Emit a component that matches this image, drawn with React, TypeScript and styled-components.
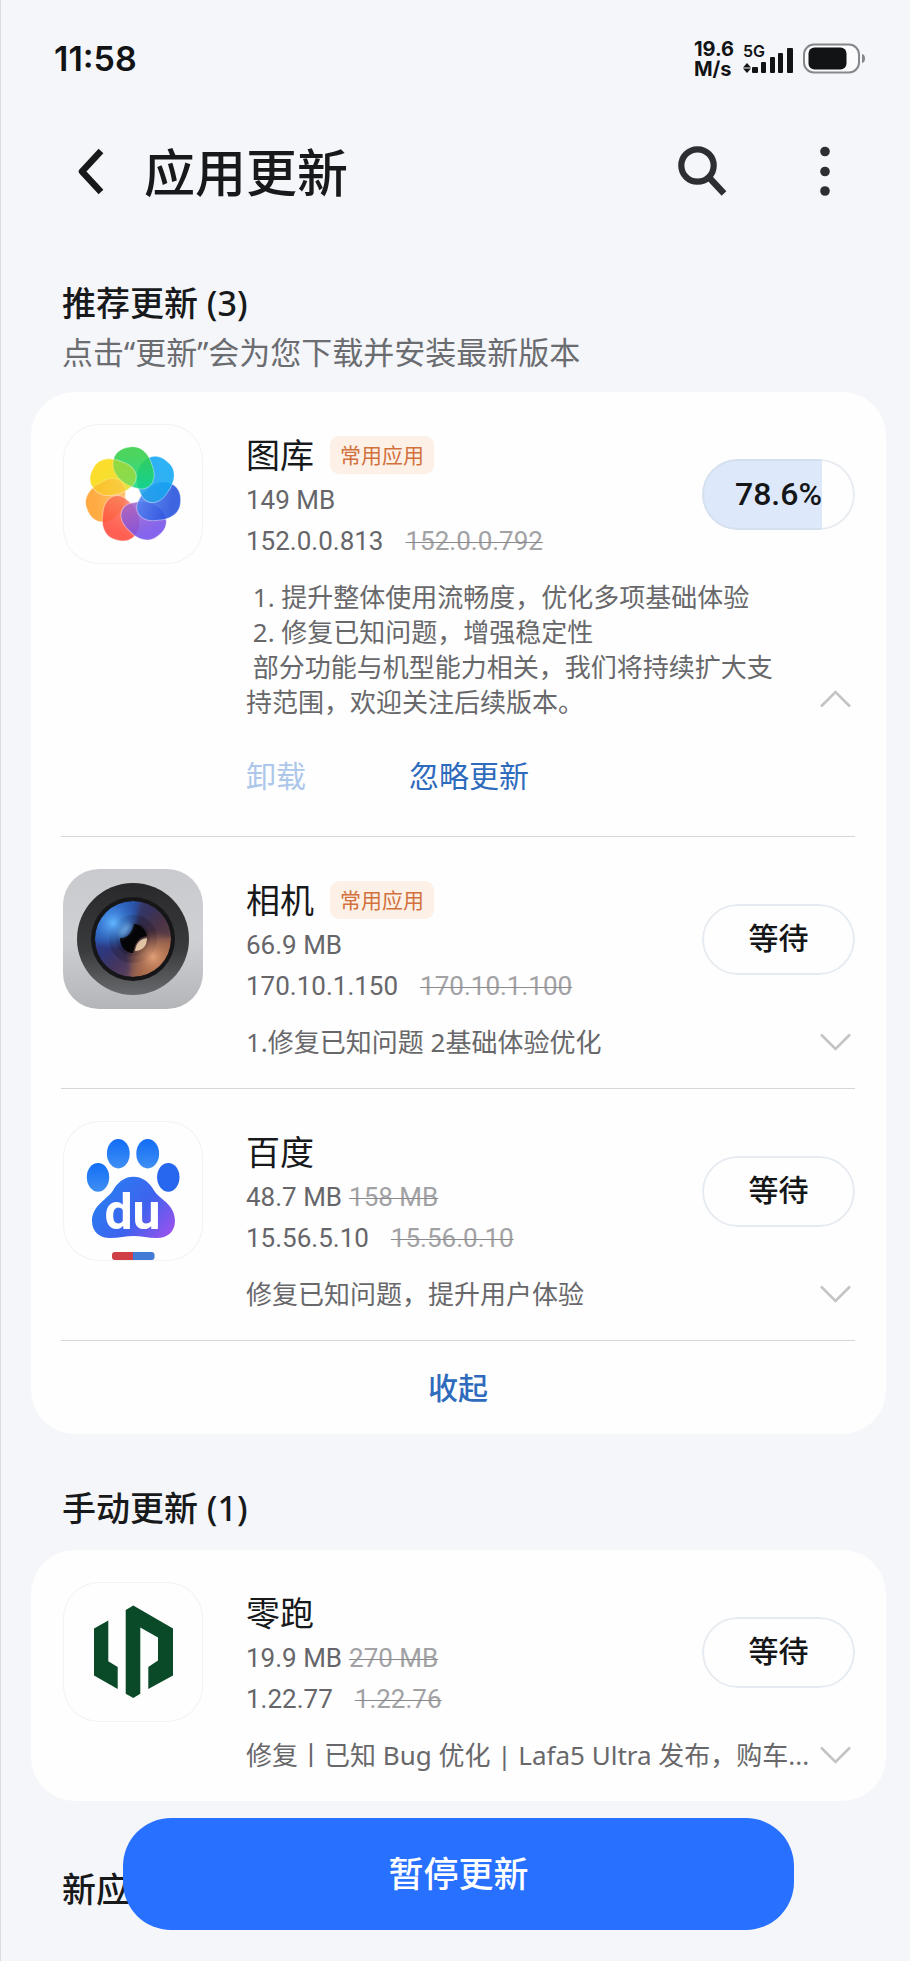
import React, { useState } from "react";
import styled, { createGlobalStyle, css } from "styled-components";

const GlobalStyle = createGlobalStyle`
  *, *::before, *::after { box-sizing: border-box; }
  html { background: #f5f6fa; }
  body {
    margin: 0;
    font-family: "Noto Sans", "Noto Sans CJK SC", sans-serif;
    color: #17191b;
  }
  h1, h2, h3, p, ul { margin: 0; padding: 0; font-weight: inherit; }
  ul { list-style: none; }
  button {
    margin: 0; padding: 0; border: 0; background: none;
    font-family: inherit; color: inherit; cursor: pointer;
  }
  svg { display: block; }
`;

const Page = styled.div`
  min-height: 100vh;
  padding: 0 24px 49px 30px;
  background: #f5f6fa;
  border-left: 1px solid #d7dae2;
`;

const StatusBar = styled.div`
  display: flex;
  align-items: center;
  justify-content: space-between;
  height: 117px;
  padding: 0 21px 0 23px;
  font-family: Inter, "Noto Sans", sans-serif;
  color: #111315;
`;

const Clock = styled.span`
  font-size: 34px;
  line-height: 40px;
  font-weight: 600;
`;

const StatusIcons = styled.div`
  display: flex;
  align-items: center;
  gap: 9px;
`;

const NetSpeed = styled.span`
  display: flex;
  flex-direction: column;
  font-size: 20px;
  line-height: 20px;
  font-weight: 700;
`;

const Signal = styled.div`
  position: relative;
  width: 51px;
  height: 32px;
`;

const NetType = styled.span`
  position: absolute;
  top: 0;
  left: 0;
  font-size: 16px;
  line-height: 16px;
  font-weight: 600;
`;

const Header = styled.header`
  display: flex;
  align-items: center;
  height: 112px;
  padding: 0 31px 2px 36px;
`;

const IconButton = styled.button`
  display: flex;
  align-items: center;
  justify-content: center;
  width: 60px;
  height: 60px;
`;

const Title = styled.h1`
  flex: 1;
  padding-left: 17px;
  font-size: 51px;
  line-height: 60px;
  font-weight: 500;
`;

const HeaderActions = styled.div`
  display: flex;
  gap: 62px;
`;

const Section = styled.section<{ $loose?: boolean }>`
  padding-top: ${(p) => (p.$loose ? 66 : 52)}px;
`;

const SectionTitle = styled.h2`
  padding-left: 31px;
  font-size: 34px;
  line-height: 44px;
  font-weight: 500;
`;

const SectionHint = styled.p`
  margin-top: 7px;
  padding-left: 31px;
  font-size: 31px;
  line-height: 40px;
  color: #6a6c70;
`;

const Card = styled.div`
  margin-top: 20px;
  padding: 0 31px 0 30px;
  border-radius: 44px;
  background: #fefefe;
`;

const Item = styled.li`
  display: flex;
  gap: 43px;
  padding: 32px 0 28px 2px;

  & + & { border-top: 1px solid #d6d6d8; }
`;

const AppIcon = styled.div<{ $framed?: boolean }>`
  flex: none;
  width: 140px;
  height: 140px;
  border-radius: 36px;
  overflow: hidden;
  ${(p) => p.$framed && css`box-shadow: inset 0 0 0 1px #f2f2f4;`}
`;

const ItemBody = styled.div`
  flex: 1;
  min-width: 0;
`;

const ItemTop = styled.div`
  display: flex;
  align-items: center;
  justify-content: space-between;
  height: 140px;
`;

const Info = styled.div`
  align-self: flex-start;
  padding-top: 6px;
`;

const NameRow = styled.div`
  display: flex;
  align-items: center;
  gap: 16px;
  height: 50px;
`;

const Name = styled.h3`
  font-size: 34px;
  line-height: 50px;
  font-weight: 400;
`;

const Tag = styled.span`
  padding: 0 10px;
  border-radius: 9px;
  background: #fdf0e6;
  font-size: 21px;
  line-height: 38px;
  color: #d2713d;
`;

const Meta = styled.p<{ $wide?: boolean }>`
  display: flex;
  gap: ${(p) => (p.$wide ? 22 : 7)}px;
  font-family: Roboto, "Noto Sans", sans-serif;
  font-size: 26px;
  line-height: 41px;
  color: #66666a;
`;

const Old = styled.del`
  color: #a2a2a5;
  text-decoration: line-through 1px #8a8a8d;
`;

const PillButton = styled.button`
  position: relative;
  flex: none;
  width: 153px;
  height: 71px;
  border-radius: 36px;
  overflow: hidden;
  font-family: Roboto, "Noto Sans CJK SC", sans-serif;
  font-weight: 500;
  color: #141618;

  &::after {
    content: "";
    position: absolute;
    inset: 0;
    border: 2px solid rgba(205, 216, 228, 0.5);
    border-radius: 36px;
  }
`;

const Fill = styled.span`
  position: absolute;
  inset: 0 auto 0 0;
  background: #dde9fb;
`;

const PillLabel = styled.span<{ $numeric: boolean }>`
  position: relative;
  display: block;
  font-size: ${(p) => (p.$numeric ? 32 : 30)}px;
  line-height: 40px;
`;

const NotesRow = styled.div`
  display: flex;
  align-items: flex-end;
  margin-top: 16px;
`;

const Notes = styled.p<{ $open: boolean }>`
  flex: 1;
  min-width: 0;
  overflow: hidden;
  white-space: ${(p) => (p.$open ? "pre-wrap" : "nowrap")};
  padding-right: ${(p) => (p.$open ? 16 : 0)}px;
  font-size: 26px;
  line-height: 35px;
  color: #68686b;
`;

const Toggle = styled.button<{ $open: boolean }>`
  flex: none;
  display: flex;
  align-items: flex-start;
  justify-content: flex-end;
  width: 46px;
  height: 35px;
  padding: ${(p) => (p.$open ? 4 : 8)}px 4px 0 0;

  svg { transform: ${(p) => (p.$open ? "rotate(180deg)" : "none")}; }
`;

const ItemActions = styled.div`
  display: flex;
  gap: 103px;
  margin: 36px 0 12px;
`;

const TextButton = styled.button`
  font-size: 30px;
  line-height: 40px;
  font-weight: 400;
  color: #2f6bbd;

  &:disabled { color: #adc7ea; cursor: default; }
`;

const CollapseButton = styled(TextButton)`
  display: block;
  width: 100%;
  height: 94px;
  border-top: 1px solid #d6d6d8;
  font-weight: 500;
`;

const PauseButton = styled.button`
  position: fixed;
  right: 116px;
  bottom: 31px;
  left: 123px;
  height: 112px;
  border-radius: 48px;
  background: #2870ff;
  font-size: 35px;
  line-height: 50px;
  font-weight: 500;
  color: #fff;
`;

function SignalBars() {
  return (
    <svg width="51" height="32" viewBox="0 0 51 32" fill="#111315" aria-hidden="true">
      <path d="M4 20l4 4.500H0zM4 30l4-4.500H0z" />
      <rect x="9" y="24" width="6" height="6" rx="1" />
      <rect x="18" y="19" width="5" height="11" rx="1" />
      <rect x="27" y="14" width="5" height="16" rx="1" />
      <rect x="35" y="10" width="5" height="20" rx="1" />
      <rect x="44" y="5" width="6" height="25" rx="1" />
    </svg>
  );
}

function Battery() {
  return (
    <svg width="62" height="32" viewBox="0 0 62 32" aria-label="电量">
      <rect x="1" y="1.500" width="55" height="28" rx="10" fill="#fbfbfd" stroke="#85878a" strokeWidth="2" />
      <rect x="5.500" y="4.500" width="38" height="22" rx="6" fill="#111315" />
      <path d="M59 11c2 .5 3 2 3 4.500s-1 4-3 4.500z" fill="#85878a" />
    </svg>
  );
}

function BackIcon() {
  return (
    <svg width="60" height="60" viewBox="0 0 60 60" fill="none" stroke="#17191b" strokeWidth="6.500" strokeLinejoin="round" aria-hidden="true">
      <path d="M34 9L15 29.500L34 50" />
    </svg>
  );
}

function SearchIcon() {
  return (
    <svg width="60" height="60" viewBox="0 0 60 60" fill="none" stroke="#2c2e31" aria-hidden="true">
      <circle cx="24.500" cy="23.500" r="16.200" strokeWidth="6.200" />
      <path d="M37 36.500L51 51.500" strokeWidth="6.500" />
    </svg>
  );
}

function MoreIcon() {
  return (
    <svg width="60" height="60" viewBox="0 0 60 60" fill="#2c2e31" aria-hidden="true">
      <circle cx="30" cy="9.500" r="4.800" />
      <circle cx="30" cy="29.500" r="4.800" />
      <circle cx="30" cy="49" r="4.800" />
    </svg>
  );
}

function ChevronIcon() {
  return (
    <svg width="31" height="19" viewBox="0 0 31 19" fill="none" stroke="#c3c4c6" strokeWidth="2.600" aria-hidden="true">
      <path d="M1 1.500L15.500 16L30 1.500" />
    </svg>
  );
}

// Ordered from the bottom petal of the stack to the top one.
const PETALS: [number, string, string][] = [
  [308.6, "#ffd70f", "#d3e23a"],
  [257.1, "#ff9f28", "#ffba55"],
  [205.7, "#ff4a3c", "#f97b5c"],
  [154.3, "#7450ea", "#a462c8"],
  [102.9, "#2450dc", "#4f83f2"],
  [51.4, "#0fa8f4", "#22a0ea"],
  [0, "#33cf48", "#0fd884"],
];

const PETAL = "M-3-48C8-50 16-41 19-30C24-18 20-7 9-6C-2-6-20-16-20-31C-20-42-12-47-3-48Z";

function GalleryLogo() {
  return (
    <svg width="140" height="140" viewBox="0 0 140 140" aria-hidden="true">
      <defs>
        {PETALS.map(([angle, outer, inner], i) => (
          <linearGradient key={angle} id={`petal${i}`} x1="0" y1="0" x2="0" y2="1">
            <stop offset="0.200" stopColor={outer} />
            <stop offset="1" stopColor={inner} />
          </linearGradient>
        ))}
        <radialGradient id="petalGlow">
          <stop offset="0.500" stopColor="#fff" />
          <stop offset="1" stopColor="#fff" stopOpacity="0" />
        </radialGradient>
      </defs>
      <g transform="translate(70 71)">
        {PETALS.map(([angle], i) => (
          <path
            key={angle}
            d={PETAL}
            transform={`rotate(${angle})`}
            fill={`url(#petal${i})`}
            fillOpacity="0.880"
            stroke="#fff"
            strokeOpacity="0.400"
            strokeWidth="1"
          />
        ))}
        <path d={PETAL} transform="rotate(308.600)" fill="#f6e02a" fillOpacity="0.450" stroke="#fff" strokeOpacity="0.400" />
        <circle r="9" fill="url(#petalGlow)" />
      </g>
    </svg>
  );
}

function CameraLogo() {
  return (
    <svg width="140" height="140" viewBox="0 0 140 140" aria-hidden="true">
      <defs>
        <linearGradient id="camBody" x1="0" y1="0" x2="0" y2="1">
          <stop offset="0" stopColor="#c9cacd" />
          <stop offset="0.500" stopColor="#cfd0d3" />
          <stop offset="1" stopColor="#b3b5b9" />
        </linearGradient>
        <linearGradient id="camRing" x1="0" y1="0" x2="0" y2="1">
          <stop offset="0" stopColor="#29292b" />
          <stop offset="0.600" stopColor="#3a3b3d" />
          <stop offset="1" stopColor="#68696c" />
        </linearGradient>
        <linearGradient id="camLens" x1="0.100" y1="0.100" x2="0.850" y2="0.900">
          <stop offset="0" stopColor="#2a66c8" />
          <stop offset="0.400" stopColor="#2c4690" />
          <stop offset="0.600" stopColor="#5e4654" />
          <stop offset="1" stopColor="#b87248" />
        </linearGradient>
        <radialGradient id="camBlue">
          <stop offset="0" stopColor="#62b6ff" />
          <stop offset="1" stopColor="#2f78e0" stopOpacity="0" />
        </radialGradient>
        <radialGradient id="camWarm">
          <stop offset="0" stopColor="#e0a078" />
          <stop offset="1" stopColor="#a8623f" stopOpacity="0" />
        </radialGradient>
        <filter id="camSoft" x="-30%" y="-30%" width="160%" height="160%">
          <feGaussianBlur stdDeviation="2.500" />
        </filter>
        <clipPath id="camClip"><circle cx="70" cy="70" r="38" /></clipPath>
      </defs>
      <rect width="140" height="140" fill="url(#camBody)" />
      <circle cx="70" cy="70" r="56" fill="url(#camRing)" />
      <circle cx="70" cy="70" r="42" fill="#161619" />
      <g clipPath="url(#camClip)">
        <circle cx="70" cy="70" r="38" fill="url(#camLens)" />
        <g filter="url(#camSoft)">
          <path d="M70 70L78 26L118 28L114 68Z" fill="#3a2a3c" opacity="0.600" />
          <path d="M70 70L66 114L24 112L28 76Z" fill="#302c6a" opacity="0.550" />
        </g>
        <circle cx="70" cy="70" r="24" fill="#15101c" opacity="0.250" />
        <circle cx="70" cy="70" r="17" fill="#100c16" opacity="0.250" />
        <circle cx="50" cy="54" r="27" fill="url(#camBlue)" />
        <circle cx="90" cy="88" r="27" fill="url(#camWarm)" />
        <path d="M57 69C66 69 69 62 71 55C77 55 83 60 84 67C74 68 72 76 70 84C63 84 57 78 57 69Z" fill="#050407" />
        <path d="M56 68C64 67 68 61 69 54C61 54 56 59 56 68Z" fill="#7fbcf2" opacity="0.700" filter="url(#camSoft)" />
        <path d="M72 82C73 74 77 70 84 69C84 77 79 82 72 82Z" fill="#f3d8b4" opacity="0.850" />
      </g>
    </svg>
  );
}

const PawText = styled.text`
  font-family: Roboto, sans-serif;
  font-size: 50px;
  font-weight: 700;
`;

function BaiduLogo() {
  return (
    <svg width="140" height="140" viewBox="0 0 140 140" role="img" aria-label="百度">
      <defs>
        <linearGradient id="paw" x1="30" y1="60" x2="105" y2="118" gradientUnits="userSpaceOnUse">
          <stop offset="0" stopColor="#2383f2" />
          <stop offset="0.600" stopColor="#3f62ee" />
          <stop offset="1" stopColor="#9a52ee" />
        </linearGradient>
        <linearGradient id="toe" x1="0" y1="0" x2="0" y2="1">
          <stop offset="0" stopColor="#116df5" />
          <stop offset="1" stopColor="#3f8ff3" />
        </linearGradient>
      </defs>
      <g fill="url(#toe)">
        <ellipse cx="55.300" cy="32.700" rx="11.400" ry="14.700" />
        <ellipse cx="84.700" cy="32.700" rx="11.400" ry="14.700" />
        <ellipse cx="35" cy="56.300" rx="11.200" ry="14.400" />
      </g>
      <ellipse cx="105.300" cy="56.300" rx="11.200" ry="14.400" fill="#2766ee" />
      <path
        d="M70.500 55.700C80 55.700 87 62 91 69.500C96 78 112 83 112 100C112 111 104 117 94 117C85 117 78 115 70.500 115C63 115 56 117 47 117C37 117 29 111 29 100C29 84 45 78 50 69.500C54 62 61 55.700 70.500 55.700Z"
        fill="url(#paw)"
      />
      <PawText x="69.500" y="108" textAnchor="middle" fill="#fff">du</PawText>
      <path d="M52 131H70V139H52a3 3 0 0 1-3-3V134a3 3 0 0 1 3-3Z" fill="#d03e46" />
      <path d="M70 131H88.500a3 3 0 0 1 3 3V136a3 3 0 0 1-3 3H70Z" fill="#427ad6" />
    </svg>
  );
}

function LeapLogo() {
  return (
    <svg width="140" height="140" viewBox="0 0 140 140" fill="#0b4a28" aria-hidden="true">
      <path d="M31 46.400L45.300 38.400V79.200L54.700 85.100V107L31 93.400Z" />
      <path d="M62.700 28L70.300 23.400L110 46.400V93.400L85.300 107V85.100L95 78.600V55.400L77.300 45.500V111.700L70.300 116L62.700 111.700Z" />
    </svg>
  );
}

interface AppUpdate {
  name: string;
  logo: React.ReactNode;
  framed: boolean;
  tag?: string;
  size: string;
  oldSize?: string;
  version: string;
  oldVersion: string;
  notes: string;
  progress?: number;
  open?: boolean;
}

const RECOMMENDED: AppUpdate[] = [
  {
    name: "图库",
    logo: <GalleryLogo />,
    framed: true,
    tag: "常用应用",
    size: "149 MB",
    version: "152.0.0.813",
    oldVersion: "152.0.0.792",
    notes:
      " 1. 提升整体使用流畅度，优化多项基础体验\n 2. 修复已知问题，增强稳定性\n 部分功能与机型能力相关，我们将持续扩大支持范围，欢迎关注后续版本。",
    progress: 78.6,
    open: true,
  },
  {
    name: "相机",
    logo: <CameraLogo />,
    framed: false,
    tag: "常用应用",
    size: "66.9 MB",
    version: "170.10.1.150",
    oldVersion: "170.10.1.100",
    notes: "1.修复已知问题 2基础体验优化",
  },
  {
    name: "百度",
    logo: <BaiduLogo />,
    framed: true,
    size: "48.7 MB",
    oldSize: "158 MB",
    version: "15.56.5.10",
    oldVersion: "15.56.0.10",
    notes: "修复已知问题，提升用户体验",
  },
];

const MANUAL: AppUpdate[] = [
  {
    name: "零跑",
    logo: <LeapLogo />,
    framed: true,
    size: "19.9 MB",
    oldSize: "270 MB",
    version: "1.22.77",
    oldVersion: "1.22.76",
    notes: "修复丨已知 Bug 优化 | Lafa5 Ultra 发布，购车...",
  },
];

function UpdateItem({ app }: { app: AppUpdate }) {
  const [open, setOpen] = useState(Boolean(app.open));
  const downloading = app.progress !== undefined;
  return (
    <Item>
      <AppIcon $framed={app.framed}>{app.logo}</AppIcon>
      <ItemBody>
        <ItemTop>
          <Info>
            <NameRow>
              <Name>{app.name}</Name>
              {app.tag && <Tag>{app.tag}</Tag>}
            </NameRow>
            <Meta>
              <span>{app.size}</span>
              {app.oldSize && <Old>{app.oldSize}</Old>}
            </Meta>
            <Meta $wide>
              <span>{app.version}</span>
              <Old>{app.oldVersion}</Old>
            </Meta>
          </Info>
          <PillButton type="button">
            {downloading && <Fill style={{ width: `${app.progress}%` }} />}
            <PillLabel $numeric={downloading}>{downloading ? `${app.progress}%` : "等待"}</PillLabel>
          </PillButton>
        </ItemTop>
        <NotesRow>
          <Notes $open={open}>{app.notes}</Notes>
          <Toggle
            type="button"
            $open={open}
            aria-expanded={open}
            aria-label={open ? "收起说明" : "展开说明"}
            onClick={() => setOpen(!open)}
          >
            <ChevronIcon />
          </Toggle>
        </NotesRow>
        {open && (
          <ItemActions>
            <TextButton type="button" disabled>卸载</TextButton>
            <TextButton type="button">忽略更新</TextButton>
          </ItemActions>
        )}
      </ItemBody>
    </Item>
  );
}

export default function App() {
  return (
    <>
      <GlobalStyle />
      <Page>
        <StatusBar>
          <Clock>11:58</Clock>
          <StatusIcons>
            <NetSpeed>
              <span>19.6</span>
              <span>M/s</span>
            </NetSpeed>
            <Signal>
              <NetType>5G</NetType>
              <SignalBars />
            </Signal>
            <Battery />
          </StatusIcons>
        </StatusBar>
        <Header>
          <IconButton type="button" aria-label="返回"><BackIcon /></IconButton>
          <Title>应用更新</Title>
          <HeaderActions>
            <IconButton type="button" aria-label="搜索"><SearchIcon /></IconButton>
            <IconButton type="button" aria-label="更多"><MoreIcon /></IconButton>
          </HeaderActions>
        </Header>
        <main>
          <Section>
            <SectionTitle>推荐更新 (3)</SectionTitle>
            <SectionHint>点击“更新”会为您下载并安装最新版本</SectionHint>
            <Card>
              <ul>
                {RECOMMENDED.map((app) => <UpdateItem key={app.name} app={app} />)}
              </ul>
              <CollapseButton type="button">收起</CollapseButton>
            </Card>
          </Section>
          <Section>
            <SectionTitle>手动更新 (1)</SectionTitle>
            <Card>
              <ul>
                {MANUAL.map((app) => <UpdateItem key={app.name} app={app} />)}
              </ul>
            </Card>
          </Section>
          <Section $loose>
            <SectionTitle>新应</SectionTitle>
          </Section>
        </main>
        <PauseButton type="button">暂停更新</PauseButton>
      </Page>
    </>
  );
}
